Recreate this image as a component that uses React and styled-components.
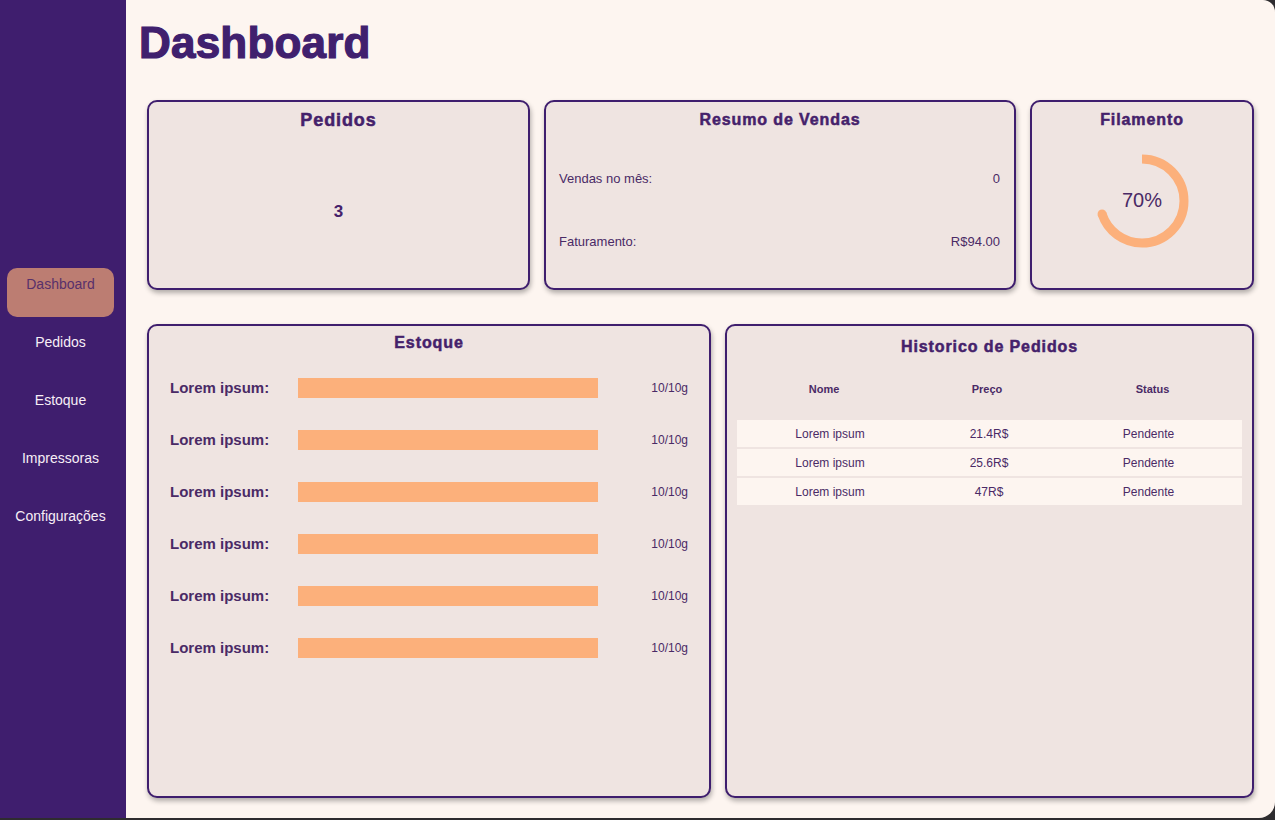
import React from "react";
import styled, { createGlobalStyle } from "styled-components";

const GlobalStyle = createGlobalStyle`
  html, body {
    margin: 0;
    padding: 0;
    background: #2e2c2f;
    font-family: "Liberation Sans", Arial, sans-serif;
  }
  * {
    box-sizing: border-box;
  }
`;

const Layout = styled.div`
  display: flex;
  height: 818px;
`;

const Sidebar = styled.nav`
  width: 126px;
  flex-shrink: 0;
  background: #3f1e6e;
  display: flex;
  flex-direction: column;
  justify-content: center;
  gap: 9px;
  padding: 0 0 2px 7px;
`;

const NavItem = styled.a`
  display: block;
  width: 107px;
  height: 49px;
  padding-top: 8px;
  border-radius: 10px;
  font-size: 14px;
  line-height: 16px;
  text-align: center;
  text-decoration: none;
  cursor: pointer;
  color: ${(p) => (p.$active ? "#58306b" : "#f7eef6")};
  background: ${(p) => (p.$active ? "#bc7d72" : "transparent")};
`;

const Main = styled.main`
  flex: 1;
  background: #fdf5f0;
  border-radius: 0 12px 16px 0;
  padding: 0 21px 20px 21px;
  display: flex;
  flex-direction: column;
`;

const Title = styled.h1`
  margin: 21px 0 35px -8px;
  font-size: 44px;
  line-height: 44px;
  font-weight: 900;
  color: #40206e;
  letter-spacing: 0.2px;
  -webkit-text-stroke: 1.2px #40206e;
`;

const TopRow = styled.section`
  display: grid;
  grid-template-columns: 383fr 472fr 224fr;
  gap: 14px;
  height: 190px;
`;

const BottomRow = styled.section`
  display: grid;
  grid-template-columns: 564fr 529fr;
  gap: 14px;
  margin-top: 34px;
  flex: 1;
`;

const Card = styled.div`
  background: #efe4e1;
  border: 2px solid #3f1e6e;
  border-radius: 10px;
  box-shadow: 1px 3px 5px rgba(0, 0, 0, 0.3);
  padding: ${(p) => p.$pt || 8}px ${(p) => p.$px || 0}px 0;
  display: flex;
  flex-direction: column;
  min-width: 0;
`;

const CardTitle = styled.h2`
  margin: 0;
  text-align: center;
  font-size: ${(p) => p.$size || 16}px;
  line-height: 20px;
  font-weight: 900;
  letter-spacing: 0.9px;
  color: #45216b;
  -webkit-text-stroke: 0.5px #45216b;
`;

const BigNumber = styled.div`
  flex: 1;
  display: flex;
  align-items: center;
  justify-content: center;
  margin-top: 6px;
  font-size: 17px;
  font-weight: bold;
  color: #45216b;
`;

const SummaryList = styled.div`
  display: flex;
  flex-direction: column;
  gap: 47px;
  padding: 41px 14px 0 13px;
`;

const SummaryRow = styled.div`
  display: flex;
  justify-content: space-between;
  font-size: 13px;
  line-height: 16px;
  color: #4a2a66;
`;

const Gauge = styled.div`
  position: relative;
  width: 100px;
  height: 100px;
  margin: 21px auto 0;
  svg {
    display: block;
  }
`;

const GaugeLabel = styled.span`
  position: absolute;
  inset: 0;
  display: flex;
  align-items: center;
  justify-content: center;
  padding-bottom: 2px;
  font-size: 20px;
  color: #4a2a66;
`;

const StockList = styled.div`
  display: flex;
  flex-direction: column;
  gap: 32px;
  padding: 25px 21px 0;
`;

const StockRow = styled.div`
  display: grid;
  grid-template-columns: 128px 300px 1fr;
  align-items: center;
  height: 20px;
`;

const StockLabel = styled.span`
  font-size: 15px;
  font-weight: bold;
  color: #4a2a66;
  margin-top: -2px;
`;

const Bar = styled.div`
  height: 20px;
  background: #fcb07b;
`;

const StockValue = styled.span`
  text-align: right;
  font-size: 12px;
  color: #4a2a66;
`;

const Table = styled.div`
  display: flex;
  flex-direction: column;
  gap: 2px;
  margin-top: 25px;
`;

const TableRow = styled.div`
  display: grid;
  grid-template-columns: ${(p) => (p.$head ? "174px 152px 1fr" : "186px 132px 1fr")};
  align-items: center;
  height: ${(p) => (p.$head ? 14 : 27)}px;
  margin-bottom: ${(p) => (p.$head ? 22 : 0)}px;
  background: ${(p) => (p.$head ? "transparent" : "#fdf5f0")};
  font-size: ${(p) => (p.$head ? 11 : 12)}px;
  font-weight: ${(p) => (p.$head ? "bold" : "normal")};
  color: #4a2a66;
  text-align: center;
`;

const navItems = ["Dashboard", "Pedidos", "Estoque", "Impressoras", "Configurações"];
const stock = Array.from({ length: 6 }, () => ({ name: "Lorem ipsum:", value: "10/10g" }));
const orders = [
  { name: "Lorem ipsum", price: "21.4R$", status: "Pendente" },
  { name: "Lorem ipsum", price: "25.6R$", status: "Pendente" },
  { name: "Lorem ipsum", price: "47R$", status: "Pendente" },
];

const FilamentRing = ({ percent }) => {
  const r = 42;
  const c = 2 * Math.PI * r;
  const angle = (percent / 100) * 2 * Math.PI;
  const ex = 50 + r * Math.sin(angle);
  const ey = 50 - r * Math.cos(angle);
  return (
    <Gauge>
      <svg width="100" height="100" viewBox="0 0 100 100">
        <circle
          cx="50"
          cy="50"
          r={r}
          fill="none"
          stroke="#fcb07b"
          strokeWidth="9"
          strokeDasharray={`${(c * percent) / 100} ${c}`}
          transform="rotate(-90 50 50)"
        />
        <circle cx={ex} cy={ey} r="4.5" fill="#fcb07b" />
      </svg>
      <GaugeLabel>{percent}%</GaugeLabel>
    </Gauge>
  );
};

export default function App() {
  return (
    <>
      <GlobalStyle />
      <Layout>
        <Sidebar>
          {navItems.map((item) => (
            <NavItem key={item} $active={item === "Dashboard"}>
              {item}
            </NavItem>
          ))}
        </Sidebar>
        <Main>
          <Title>Dashboard</Title>
          <TopRow>
            <Card>
              <CardTitle $size={18}>Pedidos</CardTitle>
              <BigNumber>3</BigNumber>
            </Card>
            <Card>
              <CardTitle>Resumo de Vendas</CardTitle>
              <SummaryList>
                <SummaryRow>
                  <span>Vendas no mês:</span>
                  <span>0</span>
                </SummaryRow>
                <SummaryRow>
                  <span>Faturamento:</span>
                  <span>R$94.00</span>
                </SummaryRow>
              </SummaryList>
            </Card>
            <Card>
              <CardTitle>Filamento</CardTitle>
              <FilamentRing percent={70} />
            </Card>
          </TopRow>
          <BottomRow>
            <Card $pt={7}>
              <CardTitle>Estoque</CardTitle>
              <StockList>
                {stock.map((s, i) => (
                  <StockRow key={i}>
                    <StockLabel>{s.name}</StockLabel>
                    <Bar />
                    <StockValue>{s.value}</StockValue>
                  </StockRow>
                ))}
              </StockList>
            </Card>
            <Card $pt={11} $px={10}>
              <CardTitle>Historico de Pedidos</CardTitle>
              <Table>
                <TableRow $head>
                  <span>Nome</span>
                  <span>Preço</span>
                  <span>Status</span>
                </TableRow>
                {orders.map((o, i) => (
                  <TableRow key={i}>
                    <span>{o.name}</span>
                    <span>{o.price}</span>
                    <span>{o.status}</span>
                  </TableRow>
                ))}
              </Table>
            </Card>
          </BottomRow>
        </Main>
      </Layout>
    </>
  );
}
